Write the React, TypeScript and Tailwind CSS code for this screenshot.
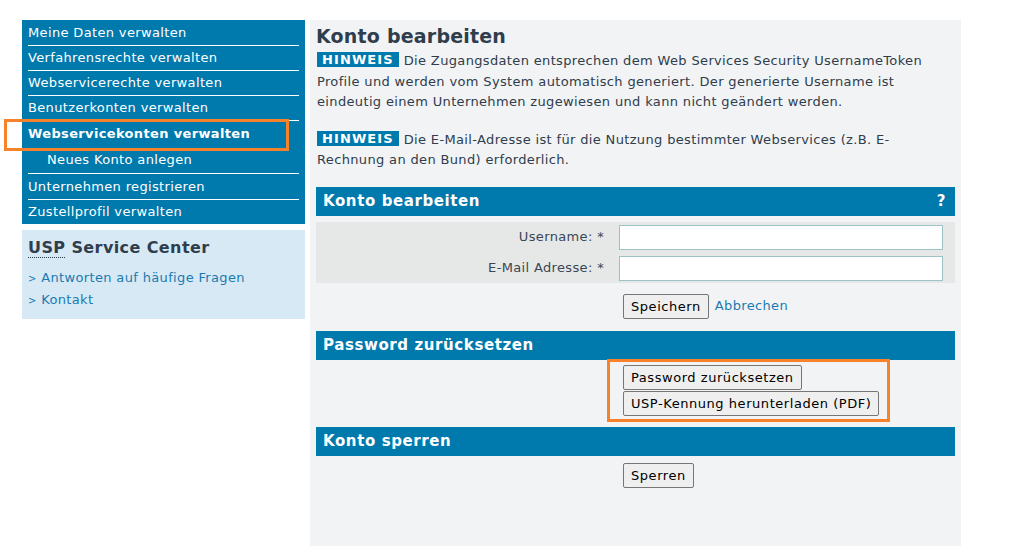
import * as React from "react";

const navItems = [
  { label: "Meine Daten verwalten", h: "h-[26px]" },
  { label: "Verfahrensrechte verwalten", h: "h-[25px]" },
  { label: "Webservicerechte verwalten", h: "h-[25px]" },
  { label: "Benutzerkonten verwalten", h: "h-[25px]" },
  { label: "Webservicekonten verwalten", h: "h-[26px]", active: true, noLine: true },
  { label: "Neues Konto anlegen", h: "h-[27px]", sub: true },
  { label: "Unternehmen registrieren", h: "h-[26px]" },
  { label: "Zustellprofil verwalten", h: "h-[24px]", noLine: true },
];

function SectionHeader({ title, help }: { title: string; help?: boolean }) {
  return (
    <div className="flex h-[29px] items-center justify-between bg-[#0079ad] px-[7px] text-[15px] font-bold tracking-[0.6px] text-white">
      <span>{title}</span>
      {help && <span className="pr-[2px]">?</span>}
    </div>
  );
}

function Button({ children }: { children: React.ReactNode }) {
  return (
    <button className="h-[25px] rounded-[2px] border border-[#767676] bg-[#efefef] px-[7px] text-[13px] leading-none tracking-[0.55px] text-black">
      {children}
    </button>
  );
}

function Hinweis() {
  return (
    <span className="mr-[5px] inline-block bg-[#0079ad] px-[5px] align-[1px] text-[13px] font-bold leading-[15px] tracking-[1.1px] text-white">
      HINWEIS
    </span>
  );
}

export default function App() {
  return (
    <div className="min-h-[546px] bg-white pt-[20px] font-['DejaVu_Sans',Verdana,sans-serif] text-[13px] tracking-[0.35px] text-[#2f3d4c]">
      <div className="flex">
        <div className="ml-[22px] w-[283px] shrink-0">
          <nav className="relative bg-[#0079ad]">
            {navItems.map((item) => (
              <div key={item.label} className="px-[6px]">
                <div
                  className={
                    item.h +
                    " " +
                    (item.noLine ? "" : "border-b border-white ") +
                    "flex items-center text-white " +
                    (item.active ? "font-bold " : "") +
                    (item.sub ? "pl-[19px] " : "")
                  }
                >
                  {item.label}
                </div>
              </div>
            ))}
            <div className="pointer-events-none absolute left-[-18px] top-[99px] h-[32px] w-[285px] border-[3px] border-[#f7822a]" />
          </nav>
          <div className="mt-[6px] bg-[#d7e9f5] px-[6px] pb-[8px] pt-[6px]">
            <h2 className="text-[16px] font-bold tracking-[0.4px] text-[#2f3d4c]">
              <abbr className="no-underline [border-bottom:1px_dotted_#2f3d4c]" title="Unternehmensserviceportal">USP</abbr> Service Center
            </h2>
            <div className="mt-[8px] flex flex-col gap-[1px] text-[#1a7bb0]">
              <span className="leading-[20px]"><span className="text-[10px]">&gt;</span> Antworten auf häufige Fragen</span>
              <span className="leading-[20px]"><span className="text-[10px]">&gt;</span> Kontakt</span>
            </div>
          </div>
        </div>

        <main className="ml-[5px] min-h-[526px] w-[651px] bg-[#f2f3f5] px-[6px] pt-[4px]">
          <h1 className="text-[19px] font-bold leading-[24px] tracking-[0.2px] text-[#2f3d4c]">Konto bearbeiten</h1>
          <p className="mt-[3px] pl-[1px] pr-[8px] leading-[20.5px]">
            <Hinweis />
            Die Zugangsdaten entsprechen dem Web Services Security UsernameToken Profile und werden vom System automatisch generiert. Der generierte Username ist eindeutig einem Unternehmen zugewiesen und kann nicht geändert werden.
          </p>
          <p className="mt-[17px] pl-[1px] pr-[48px] leading-[20.5px]">
            <Hinweis />
            Die E-Mail-Adresse ist für die Nutzung bestimmter Webservices (z.B. E-Rechnung an den Bund) erforderlich.
          </p>

          <section className="mt-[16px]">
            <SectionHeader title="Konto bearbeiten" help />
            <div className="mt-[6px] flex flex-col gap-[6px] bg-[#e6e8e8] pb-[2px] pr-[12px] pt-[3px]">
              <div className="flex items-center">
                <label className="w-[303px] pr-[15px] text-right text-[#3b4654]">Username: *</label>
                <input className="h-[25px] flex-1 border border-[#9cc2c4] bg-white" />
              </div>
              <div className="flex items-center">
                <label className="w-[303px] pr-[15px] text-right text-[#3b4654]">E-Mail Adresse: *</label>
                <input className="h-[25px] flex-1 border border-[#9cc2c4] bg-white" />
              </div>
            </div>
            <div className="flex items-center gap-[6px] pb-[12px] pl-[307px] pt-[11px]">
              <Button>Speichern</Button>
              <span className="text-[#1a7bb0]">Abbrechen</span>
            </div>
          </section>

          <section>
            <SectionHeader title="Password zurücksetzen" />
            <div className="-mt-[1px] flex pl-[291px]">
              <div className="flex flex-col items-start gap-[1px] border-[3px] border-[#f7822a] pb-[3px] pl-[13px] pr-[8px] pt-[3px]">
                <Button>Password zurücksetzen</Button>
                <Button>USP-Kennung herunterladen (PDF)</Button>
              </div>
            </div>
          </section>

          <section className="mt-[5px]">
            <SectionHeader title="Konto sperren" />
            <div className="pl-[307px] pt-[7px]">
              <Button>Sperren</Button>
            </div>
          </section>
        </main>
      </div>
    </div>
  );
}
